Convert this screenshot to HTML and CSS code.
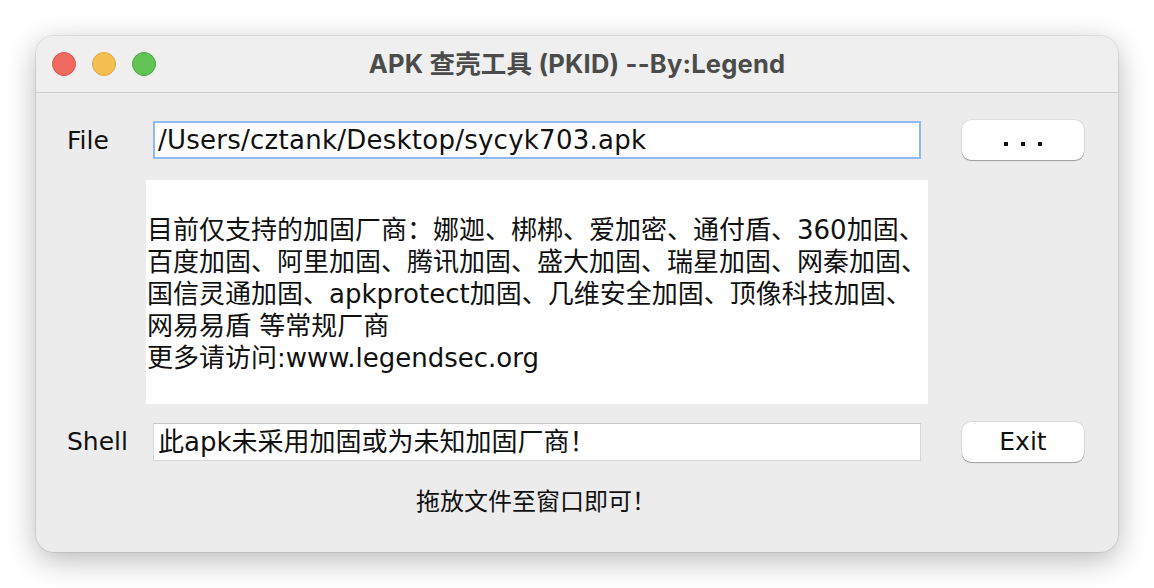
FILE: index.html
```html
<!DOCTYPE html>
<html>
<head>
<meta charset="utf-8">
<link rel="stylesheet" href="styles.css">
</head>
<body>
<div class="window">
  <div class="titlebar">
    <div class="lights">
      <span class="light red"></span>
      <span class="light yellow"></span>
      <span class="light green"></span>
    </div>
    <div class="title">APK 查壳工具 (PKID) --By:Legend</div>
  </div>
  <div class="content">
    <div class="row row-file">
      <div class="label">File</div>
      <div class="field focused">/Users/cztank/Desktop/sycyk703.apk</div>
      <button class="btn dots"><span></span><span></span><span></span></button>
    </div>

    <div class="info">
      <div class="info-text">目前仅支持的加固厂商：娜迦、梆梆、爱加密、通付盾、360加固、<br>百度加固、阿里加固、腾讯加固、盛大加固、瑞星加固、网秦加固、<br>国信灵通加固、apkprotect加固、几维安全加固、顶像科技加固、<br>网易易盾 等常规厂商<br>更多请访问:www.legendsec.org</div>
    </div>

    <div class="row row-shell">
      <div class="label">Shell</div>
      <div class="field">此apk未采用加固或为未知加固厂商！</div>
      <button class="btn">Exit</button>
    </div>

    <div class="hint">拖放文件至窗口即可！</div>
  </div>
</div>
</body>
</html>
```

FILE: styles.css
```css
html, body {
  margin: 0;
  padding: 0;
  background: #ffffff;
}
body {
  width: 1154px;
  height: 588px;
  overflow: hidden;
  font-family: "DejaVu Sans", "Noto Sans CJK SC", sans-serif;
}
.window {
  margin: 36px 0 0 36px;
  width: 1082px;
  height: 516px;
  background: #ececec;
  border-radius: 18px;
  box-shadow: 0 8px 30px rgba(0,0,0,0.28), 0 0 0 1px rgba(0,0,0,0.08);
  overflow: hidden;
  display: flex;
  flex-direction: column;
}
.titlebar {
  height: 56px;
  flex: none;
  background: #eeefee;
  border-bottom: 1px solid #cfcfcf;
  display: flex;
  align-items: center;
  position: relative;
}
.lights {
  display: flex;
  gap: 16px;
  padding-left: 16px;
}
.light {
  width: 24px;
  height: 24px;
  border-radius: 50%;
  box-sizing: border-box;
}
.red { background: #ee6a5f; border: 1px solid #d55a50; }
.yellow { background: #f5bf4f; border: 1px solid #d9a63e; }
.green { background: #61c454; border: 1px solid #4ea944; }
.title {
  position: absolute;
  left: 0;
  right: 0;
  top: 0;
  line-height: 56px;
  text-align: center;
  font-family: "Inter", "Noto Sans CJK SC", sans-serif;
  font-weight: 700;
  font-size: 25.5px;
  letter-spacing: 0.2px;
  color: #4b4b4b;
}
.content {
  display: flex;
  flex-direction: column;
  padding-top: 27px;
}
.row {
  display: flex;
  align-items: center;
  padding-left: 31px;
}
.row-file { height: 40px; }
.row-shell { height: 41px; margin-top: 17px; }
.label {
  width: 86px;
  flex: none;
  font-size: 25px;
  color: #111;
}
.field {
  width: 768px;
  flex: none;
  background: #fff;
  height: 38px;
  box-sizing: border-box;
  border: 1px solid #d6d6d6;
  border-top-color: #c8c8c8;
  font-size: 26px;
  line-height: 36px;
  padding-left: 4px;
  color: #111;
  white-space: nowrap;
  overflow: hidden;
}
.field.focused {
  border: 2px solid #8fbaf0;
  line-height: 34px;
  padding-left: 3px;
  letter-spacing: 0.25px;
}
.btn {
  margin: 0 0 0 41px;
  padding: 0;
  width: 122px;
  flex: none;
  background: #fff;
  border: none;
  border-radius: 9px;
  box-shadow: 0 1px 1px rgba(0,0,0,0.3), 0 0 0 0.5px rgba(0,0,0,0.12);
  font-family: "DejaVu Sans", sans-serif;
  font-size: 25px;
  color: #111;
  height: 40px;
}
.dots {
  display: flex;
  justify-content: center;
  align-items: center;
  gap: 13px;
  padding-top: 7px;
}
.dots span {
  width: 4px;
  height: 4px;
  background: #111;
}
.info {
  margin: 20px 0 0 110px;
  width: 782px;
  height: 224px;
  background: #fff;
  display: flex;
  align-items: center;
}
.info-text {
  font-size: 26px;
  line-height: 32px;
  color: #111;
  white-space: nowrap;
  padding-left: 1px;
  padding-top: 4px;
}
.hint {
  margin-left: 117px;
  width: 768px;
  text-align: center;
  font-size: 24px;
  color: #111;
  padding-top: 20px;
  padding-right: 2px;
  box-sizing: border-box;
}
```
